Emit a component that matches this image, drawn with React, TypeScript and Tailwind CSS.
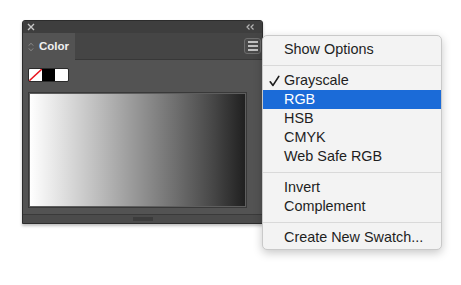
import React from "react";

const Sep = () => (
  <div className="h-[12px] flex items-center">
    <div className="h-px w-full bg-[#d9d9d9]" />
  </div>
);

const Item = ({ label, checked, active }: { label: string; checked?: boolean; active?: boolean }) => (
  <div
    className={`h-[19px] flex items-center pl-[21px] relative ${active ? "bg-[#1b6bd8] text-white" : "text-[#1e1e1e]"}`}
  >
    {checked && (
      <svg className="absolute left-[6px] top-[4px]" width="11" height="12" viewBox="0 0 11 12">
        <path d="M1.2 6.8 L4 10.4 L9.8 1.4" fill="none" stroke="#1e1e1e" strokeWidth="1.7" strokeLinecap="round" strokeLinejoin="round" />
      </svg>
    )}
    <span className="leading-none">{label}</span>
  </div>
);

export default function App() {
  return (
    <div className="w-[461px] h-[285px] bg-white relative overflow-hidden" style={{ fontFamily: '"Liberation Sans", Arial, sans-serif' }}>
      <div className="pt-[20px] pl-[22px]">
        <div className="w-[241px] h-[204px] bg-[#535353] border border-[#2c2c2c] rounded-t-[3px] flex flex-col shadow-[0_2px_3px_rgba(0,0,0,0.25)]">
          {/* title bar */}
          <div className="h-[12px] bg-[#3e3e3e] flex items-center justify-between px-[4px] rounded-t-[3px]">
            <svg width="8" height="8" viewBox="0 0 8 8">
              <path d="M1 1 L7 7 M7 1 L1 7" stroke="#c8c8c8" strokeWidth="1.4" />
            </svg>
            <svg width="8" height="6" viewBox="0 0 8 6" className="mr-[4px]">
              <path d="M3.5 0.5 L1 3 L3.5 5.5 M7.5 0.5 L5 3 L7.5 5.5" fill="none" stroke="#b5b5b5" strokeWidth="1.2" />
            </svg>
          </div>
          {/* tab row */}
          <div className="h-[27px] bg-[#454545] flex border-b border-[#383838]">
            <div className="w-[52px] h-[27px] bg-[#535353] flex items-center pl-[5px] gap-[5px]">
              <svg width="6" height="10" viewBox="0 0 6 10">
                <path d="M0.8 3.6 L3 1.2 L5.2 3.6 M0.8 6.4 L3 8.8 L5.2 6.4" fill="none" stroke="#8a8a8a" strokeWidth="1" />
              </svg>
              <span className="text-[11.5px] font-bold text-[#f0f0f0] leading-none">Color</span>
            </div>
            <div className="flex-1" />
            <div className="mt-[5px] mr-[1px] w-[17px] h-[16px] rounded-[3px] border border-[#6e6e6e] bg-[#4a4a4a] flex flex-col items-center justify-center gap-[2px]">
              <div className="w-[10px] h-[2px] bg-[#c0c0c0]" />
              <div className="w-[10px] h-[2px] bg-[#c0c0c0]" />
              <div className="w-[10px] h-[2px] bg-[#c0c0c0]" />
            </div>
          </div>
          {/* swatches */}
          <div className="pl-[5px] pt-[8px] flex">
            <div className="flex border border-[#2a2a2a] rounded-[2px] overflow-hidden h-[14px]">
              <div className="w-[13px] h-full bg-white relative">
                <svg className="absolute inset-0" width="13" height="12" viewBox="0 0 13 12">
                  <path d="M0 12 L13 0" stroke="#e8141e" strokeWidth="1.5" />
                </svg>
              </div>
              <div className="w-[13px] h-full bg-black" />
              <div className="w-[13px] h-full bg-white" />
            </div>
          </div>
          {/* gradient */}
          <div className="pl-[5px] pt-[10px] flex">
            <div className="w-[219px] h-[116px] border border-[#393939] p-px bg-[#5e5e5e]">
              <div className="w-full h-full bg-[linear-gradient(to_right,#ffffff_0%,#e0e0e0_15%,#bcbcbc_32%,#959595_50%,#6e6e6e_68%,#474747_85%,#202020_100%)]" />
            </div>
          </div>
          <div className="flex-1" />
          {/* bottom bar */}
          <div className="h-[9px] border-t border-[#3a3a3a] bg-[#4b4b4b] flex justify-center">
            <div className="w-[20px] h-[4px] mt-[2px] bg-[#3c3c3c]" />
          </div>
        </div>
      </div>

      {/* dropdown menu */}
      <div className="absolute left-[262px] top-[35px] w-[180px] h-[215px] bg-[#f3f3f3] border border-[#c9c9c9] rounded-[5px] shadow-[0_3px_10px_rgba(0,0,0,0.22)] pt-[4px] text-[14.4px] overflow-hidden">
        <Item label="Show Options" />
        <Sep />
        <Item label="Grayscale" checked />
        <Item label="RGB" active />
        <Item label="HSB" />
        <Item label="CMYK" />
        <Item label="Web Safe RGB" />
        <Sep />
        <Item label="Invert" />
        <Item label="Complement" />
        <Sep />
        <Item label="Create New Swatch..." />
      </div>
    </div>
  );
}
